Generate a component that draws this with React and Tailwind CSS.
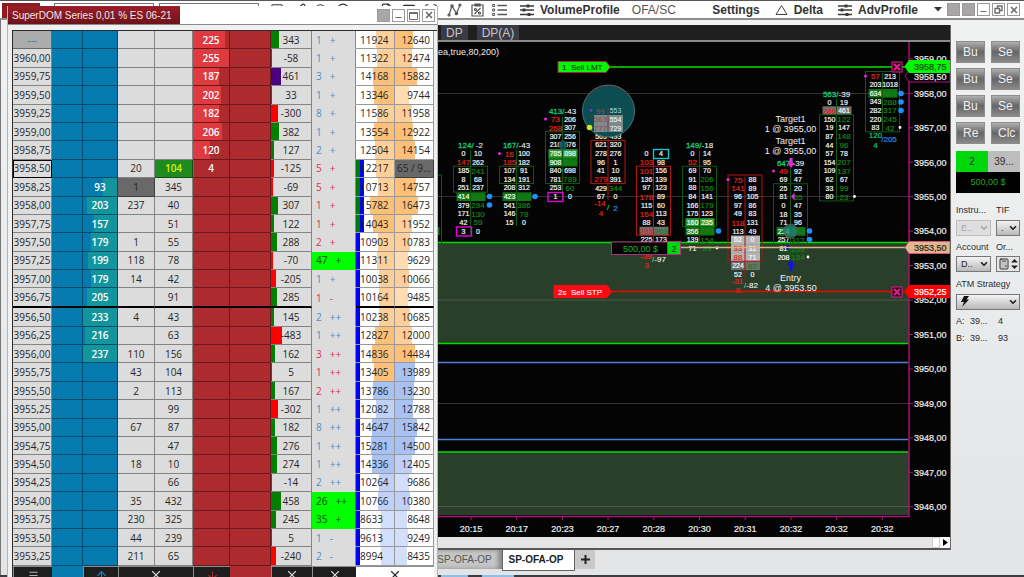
import React from "react";
import {
  Search, Circle, Pencil, Square, FileText, AppWindow, Scan, Minus, ChevronDown, X,
  Calculator, ArrowUp, ArrowDown, Menu,
} from "lucide-react";

/* ---------- SuperDOM ladder ---------- */

// price, bid, tradedBid, tradedAsk, ask, delta, speed, sign, tone, volA, volB
const LADDER = [
  ["---", "", "", "", 225, 343, 1, "+", "b", 11924, 12640],
  ["3960,00", "", "", "", 255, -58, 1, "+", "b", 11322, 12474],
  ["3959,75", "", "", "", 187, 461, 3, "+", "b", 14168, 15882],
  ["3959,50", "", "", "", 202, 33, 1, "+", "b", 13346, 9744],
  ["3959,25", "", "", "", 182, -300, 8, "+", "b", 11586, 11958],
  ["3959,00", "", "", "", 206, 382, 1, "+", "b", 13554, 12922],
  ["3958,75", "", "", "", 120, 127, 2, "+", "b", 12504, 14154],
  ["3958,50", "", 20, 104, 4, -125, 5, "+", "r", 12217, "65 / 9..."],
  ["3958,25", 93, 1, 345, "", -69, 5, "+", "r", 10713, 14757],
  ["3958,00", 203, 237, 40, "", 307, 1, "+", "r", 15782, 16473],
  ["3957,75", 157, "", 51, "", 122, 1, "+", "r", 14043, 11952],
  ["3957,50", 179, 1, 55, "", 288, 2, "+", "r", 10903, 10783],
  ["3957,25", 199, 118, 78, "", -70, 47, "+", "hl", 11311, 9629],
  ["3957,00", 179, 14, 42, "", -205, 1, "+", "b", 10038, 10066],
  ["3956,75", 205, "", 91, "", 285, 1, "-", "r", 10164, 9485],
  ["3956,50", 233, 4, 43, "", 145, 2, "++", "b", 10238, 10685],
  ["3956,25", 216, "", 63, "", -483, 1, "++", "b", 12827, 12000],
  ["3956,00", 237, 110, 156, "", 162, 3, "++", "r", 14836, 14484],
  ["3955,75", "", 43, 104, "", 5, 1, "++", "r", 13405, 13989],
  ["3955,50", "", 2, 113, "", 167, 2, "++", "r", 13786, 13230],
  ["3955,25", "", "", 99, "", -302, 1, "++", "b", 12082, 12788],
  ["3955,00", "", 67, 87, "", 182, 8, "++", "b", 14647, 15842],
  ["3954,75", "", "", 47, "", 276, 1, "++", "b", 15281, 14500],
  ["3954,50", "", 18, 10, "", 274, 1, "++", "b", 14336, 12405],
  ["3954,25", "", "", 66, "", -14, 2, "++", "b", 10264, 9686],
  ["3954,00", "", 35, 432, "", 458, 26, "++", "hl", 10766, 10380],
  ["3953,75", "", 230, 325, "", 245, 35, "+", "hl", 8633, 8648],
  ["3953,50", "", 44, 239, "", 5, 1, "-", "b", 9613, 9249],
  ["3953,25", "", 211, 65, "", -240, 2, "-", "b", 8994, 8435],
];

const TONES = {
  b: "text-[#4f8fc4]",
  r: "text-[#dc2f55]",
  hl: "text-[#0b3b0b] bg-[#00ff00]",
};

const layer = (side, color, width) => `linear-gradient(to ${side}, ${color} ${width}px, transparent ${width}px)`;

const bar = (side, color, width) => ({
  backgroundImage: layer(side, color, width),
  backgroundRepeat: "no-repeat",
});

const shade = (value, blue) => {
  const level = value > 12600 ? 0 : value > 9900 ? 1 : 2;
  return (blue ? ["#a8c2f4", "#bfd1f8", "#d2dffb"] : ["#fdc078", "#fecf98", "#ffdcb2"])[level];
};

// Session range strips at the left edge of the first volume column.
const volumeBackground = (value, i) => {
  const layers = [layer("left", shade(value, i > 18), Math.round(value * 0.0015))];
  if (i >= 7 && i < 11) layers.unshift(layer("right", "#007a00", 4), layer("right", "#0000ff", 8));
  if (i >= 11) layers.unshift(layer("right", "#0000ff", 4));
  return { backgroundImage: layers.join(", "), backgroundRepeat: "no-repeat" };
};

function LadderRow({ row, i }) {
  const [price, bid, tBid, tAsk, ask, delta, speed, sign, tone, volA, volB] = row;
  const line = price === "3956,75" ? "border-b-2 border-b-black" : "border-b border-b-black/40";
  const cell = `${line} border-r border-r-black/40 p-0`;
  const current = price === "3958,50";
  const deltaColor = delta > 460 ? "#4b0082" : delta < 0 ? "#ff0000" : "#008000";
  return (
    <tr>
      <th scope="row" className={`${cell} font-normal ${i === 0 ? "bg-[#acacac] text-[#1c87a0]" : "bg-[#dcdcdc]"} ${current ? "outline-1 -outline-offset-1 outline-black" : ""}`}>
        {price}
      </th>
      <td className={`${cell} bg-[#067baf]`} />
      <td className={`${cell} bg-[#067baf] text-center font-semibold text-white`} style={bid ? bar("left", "#12959c", Math.round(bid * 0.147)) : undefined}>{bid}</td>
      <td className={`${cell} text-center ${price === "3958,25" ? "bg-[#696969]" : "bg-[#dcdcdc]"}`}>{tBid}</td>
      <td className={`${cell} text-center ${current ? "bg-[#1f8a1f] font-semibold text-[#d8f000]" : "bg-[#dcdcdc]"}`}>{tAsk}</td>
      <td className={`${cell} bg-[#ad2b2f] text-center font-semibold text-white`} style={ask ? bar("right", "#de3a3f", Math.round(ask * 0.141)) : undefined}>{ask}</td>
      <td className={`${cell} bg-[#ad2b2f]`} />
      <td className={`${cell} bg-[#dcdcdc] text-center`} style={bar("right", deltaColor, Math.max(1, Math.round(Math.abs(delta) * 0.022)))}>{delta}</td>
      <td className={`border-r border-b border-r-black/40 border-b-transparent p-0 pl-1 ${tone === "hl" ? "" : "bg-[#dcdcdc]"} ${TONES[tone]}`}>
        <span className="flex gap-2 font-medium"><span>{speed}</span><span>{sign}</span></span>
      </td>
      <td className={`${cell} bg-white text-left`} style={volumeBackground(volA, i)}>
        <span className="block pl-1">{volA}</span>
      </td>
      {current ? (
        <td className={`${cell} bg-[#696969] text-center whitespace-nowrap`}>{volB}</td>
      ) : (
        <td className={`${cell} bg-white text-right`} style={bar("right", shade(volB, i > 17), Math.round(volB * 0.0014))}>
          <span className="block pr-[3px]">{volB}</span>
        </td>
      )}
    </tr>
  );
}

const FOOT = "border-l border-t border-[#8c8c8c] bg-[#1e1e1e] p-0";

function FootButton({ label, children }) {
  return <button aria-label={label} className="flex h-4 w-full items-center justify-center">{children}</button>;
}

function WinButton({ label, children, solid }) {
  return (
    <button aria-label={label} className={`flex size-[13px] items-center justify-center border border-[#9a9a9a] text-[#6d6d6d] ${solid ? "bg-[#aaa6a8]" : "bg-white"}`}>
      {children}
    </button>
  );
}

function SuperDom() {
  return (
    <section className="absolute top-[6px] bottom-0 left-[7px] flex w-[431px] flex-col overflow-hidden border-x border-[#b4b4b4] bg-[#eef0f1]">
      <header className="flex h-[19px] shrink-0 items-stretch border-b border-[#8a8a8a] bg-white">
        <h1 className="flex w-[172px] items-center bg-linear-to-b from-[#9a1f28] to-[#6e1219] pl-1 text-[10px] whitespace-nowrap text-[#f7e6e6]">
          SuperDOM Series 0,01 % ES 06-21
        </h1>
        <div className="ml-auto flex items-center gap-[2px] pr-[2px]">
          <WinButton label="Link" solid />
          <WinButton label="Minimize"><Minus size={9} strokeWidth={3} className="mt-1" /></WinButton>
          <WinButton label="Maximize"><svg width="9" height="9"><path d="M.5 1.5h8v7h-8zM.5 2.5h8" fill="none" stroke="currentColor" /></svg></WinButton>
          <WinButton label="Close"><X size={10} strokeWidth={4} /></WinButton>
        </div>
      </header>
      <div className="mt-[5px] ml-[4px] border-t border-l border-[#2d2d2d]">
        <table className="h-[552px] w-[421px] table-fixed border-separate border-spacing-0 font-['Open_Sans','Noto_Sans',sans-serif] text-[10px] leading-3 text-[#262626]">
          <colgroup>
            <col className="w-[39px]" /><col className="w-[31px]" /><col className="w-[35px]" />
            <col className="w-[37px]" /><col className="w-[38px]" /><col className="w-[37px]" />
            <col className="w-[41px]" /><col className="w-[41px]" /><col className="w-[44px]" />
            <col className="w-[39px]" /><col className="w-[39px]" />
          </colgroup>
          <tbody>
            {LADDER.map((row, i) => <LadderRow key={row[0]} row={row} i={i} />)}
          </tbody>
          <tfoot>
            <tr>
              <td className={FOOT}><FootButton label="Menu"><Menu size={11} className="text-[#c4c4c4]" /></FootButton></td>
              <td className="bg-[#067baf] p-0" />
              <td className={FOOT}><FootButton label="Center bid"><ArrowUp size={13} className="text-[#1488c4]" /></FootButton></td>
              <td colSpan={2} className={FOOT}><FootButton label="Clear trades"><X size={14} className="text-[#d0d0d0]" /></FootButton></td>
              <td className={FOOT}><FootButton label="Center ask"><ArrowDown size={13} className="text-[#b0282c]" /></FootButton></td>
              <td className="bg-[#ad2b2f] p-0" />
              <td className={FOOT}><FootButton label="Clear delta"><X size={14} className="text-[#d0d0d0]" /></FootButton></td>
              <td className={FOOT}><FootButton label="Clear speed"><X size={14} className="text-[#d0d0d0]" /></FootButton></td>
              <td colSpan={2} className="border-t border-[#8c8c8c] bg-white p-0"><FootButton label="Clear volume"><X size={14} /></FootButton></td>
            </tr>
          </tfoot>
        </table>
      </div>
    </section>
  );
}

/* ---------- Footprint chart ---------- */

const PITCH = 8.62;

// Cell prefixes: r = red, g = green. Row mark: h = green, H = bright green, s = gray, w = light gray.
const COLUMNS = [
  { x: 470.5, y: 153.5, title: ["124", " -2"], box: [2, 5, "g"], rows: "0 10|r147 262|185 g241|8 68|251 237|414 g422 h|379 g294|171 g130|42 g59|3 0" },
  { x: 516.5, y: 153.5, title: ["167", "-43"], box: [2, 4, "g"], rows: "r16 100|r185 182|107 91|134 191|208 312|423 g602 h|541 g386|146 g78|15 0" },
  { x: 562.5, y: 119, title: ["413", "-43"], box: [2, 8, "g"], rows: "r73 206|r268 307|307 256|210 576|785 898 H|908 g949 h|840 698|781 g789|253 g60|1 0" },
  { x: 608, y: 110.5, box: [4, 9, "r"], rows: "||| 565 493|621 320|278 276|96 1|41 10|r279 391|429 g344|67 0" },
  { x: 653.5, y: 153.5, box: [2, 10, "r"], rows: "0 4|r103 98|r101 156|136 139|97 123|r178 89|115 60|r164 113|88 43|r293 g263 s|225 173" },
  { x: 699.5, y: 153.5, title: ["149", "-18"], box: [2, 9, "g"], rows: "0 14|r52 95|69 70|91 g206|88 g156|84 141|166 g179|175 123|160 235 H|356 g393 h|139 g154|71 g39" },
  { x: 745, y: 179.5, box: [0, 10, "r"], rows: "r75 88|r141 89|96 105|97 86|49 83|r118 131|113 49|52 0 w|r33 31 w|r88 71 w|224 g87 s|52 0" },
  { x: 790.5, y: 171, title: ["647", "-39"], box: [2, 10, "g"], rows: "r49 92|69 47|25 20|81 g65|0 47|18 35|71 96|214 g331 h|257 g317|81 g259|208 g134" },
  { x: 836.5, y: 102, title: ["563", "-39"], box: [2, 12, "g"], rows: "0 19|r246 461 s|150 g122|19 147|87 g148|44 g96|57 78|154 g207|109 g137|62 67|33 g99|80 g23" },
  { x: 882.5, y: 76, box: [0, 7, "g"], rows: "r57 213|203 1018|634 g903 h|343 g288|282 g317|220 g245|83 g42" },
];

const MARK = { h: "#0f7412", H: "#2e9a31", s: "#6f6f6f", w: "#b4b4b4" };

function Cell({ x, y, value }) {
  const tone = value[0];
  const color = tone === "r" ? "#e82020" : tone === "g" ? "#178217" : "#f4f4f4";
  const colored = color !== "#f4f4f4";
  return (
    <text x={x} y={y + (colored ? 3 : 2.5)} fontSize={colored ? 8 : 7} fill={color} stroke={color} strokeWidth="0.2">
      {colored ? value.slice(1) : value}
    </text>
  );
}

function FootprintColumn({ x, y, title, box, rows }) {
  const list = rows.split("|").map((r) => r.trim().split(" "));
  const edge = box[2] === "r" ? "#b01414" : "#0b5a0f";
  return (
    <g textAnchor="middle">
      {list.map(([, , mark], i) => mark && (
        <rect key={i} x={x - 14} y={y + i * PITCH - 4.3} width="29" height="8.7" fill={MARK[mark]} />
      ))}
      <path d={`M${x} ${y - 3}V${y + list.length * PITCH - 5}`} stroke={edge} />
      <rect x={x - 17} y={y + box[0] * PITCH - 4.5} width="34" height={(box[1] - box[0]) * PITCH} fill="none" stroke={edge} />
      {list.map(([l, r], i) => r && (
        <g key={i}>
          <Cell x={x - 7} y={y + i * PITCH} value={l} />
          <Cell x={x + 7.5} y={y + i * PITCH} value={r} />
        </g>
      ))}
      {title && (
        <text x={x} y={y - 5.5} fontSize="8" fill="#f0f0f0" stroke="#f0f0f0" strokeWidth="0.1" xmlSpace="preserve">
          <tspan fill="#12c877" stroke="#12c877" strokeWidth="0.3">{title[0]}/</tspan>{title[1]}
        </text>
      )}
    </g>
  );
}

const GRID = [93.5, 196.5, 300, 403.5, 506.5];
const PRICES = [3959, 3958, 3957, 3956, 3955, 3954, 3953, 3952, 3951, 3950, 3949, 3948, 3947, 3946];
const TIMES = ["20:15", "20:17", "20:23", "20:27", "20:28", "20:30", "20:31", "20:32", "20:32", "20:32"];
const BLUE_DOTS = [[489.5, 196.5], [489.5, 205], [535, 196.5], [718.5, 231], [809.5, 231], [809.5, 239.5], [901, 93.5], [901, 102], [901, 110.5]];
const PINK_DOTS = [[499.5, 153.5], [545.5, 119], [728, 179.5], [773.5, 171], [865.5, 76]];
const WHITE_DOTS = [[717, 248], [808, 257], [854.5, 196.5], [900, 127.5]];

function PriceTag({ y, fill, stroke, color, children }) {
  return (
    <g>
      <path d={`M905 ${y}L909 ${y - 6}H950V${y + 6}H909Z`} fill={fill} stroke={stroke} />
      <text x="914" y={y + 3.5} fontSize="9" fill={color} stroke={color} strokeWidth="0.2">{children}</text>
    </g>
  );
}

function CancelBox({ y }) {
  return (
    <g stroke="#e0208c">
      <rect x="892" y={y - 5} width="10" height="10" fill="#2a0418" />
      <path d={`M894 ${y - 3}l6 6m0 -6l-6 6`} strokeWidth="2" />
    </g>
  );
}

function Chart() {
  return (
    <svg viewBox="7 42 943 495" preserveAspectRatio="xMaxYMin slice" className="block min-h-0 w-full flex-1 bg-[#040404] font-['Liberation_Sans',Arial,sans-serif]" role="img" aria-label="ES 06-21 footprint chart">
      <rect x="7" y="242" width="902" height="102" fill="#293f29" />
      <rect x="7" y="452" width="902" height="63" fill="#293f29" />
      <g stroke="#8a8a8a" strokeOpacity="0.35">
        {GRID.map((y) => <path key={y} d={`M7 ${y}H909`} />)}
      </g>
      <path d="M7 242.5H908M7 343.5H908M7 452H908" stroke="#00dc00" strokeWidth="1.6" />
      <path d="M7 362.5H908M7 439.5H908" stroke="#4f7fd6" strokeWidth="1.4" />
      <path d="M909 42V516.5H7" fill="none" stroke="#b0107a" strokeWidth="1.4" />

      <rect x="420" y="175" width="21.5" height="77" fill="none" stroke="#0b5a0f" />
      <rect x="420" y="227" width="19.5" height="8" fill="#0f7412" />
      {COLUMNS.map((c) => <FootprintColumn key={c.x} {...c} />)}

      <g fill="none" strokeWidth="1.4">
        <rect x="456.5" y="227" width="15" height="9" stroke="#e000e0" />
        <rect x="548" y="192.5" width="15" height="9" stroke="#e000e0" />
        <rect x="653.5" y="149.5" width="15" height="9" stroke="#10c8d0" />
      </g>
      <g fill="#1e90ff">{BLUE_DOTS.map(([x, y]) => <circle key={`${x}-${y}`} cx={x} cy={y} r="2.8" />)}</g>
      <g fill="#f020f0">{PINK_DOTS.map(([x, y]) => <circle key={x} cx={x} cy={y} r="1.5" />)}</g>
      <g fill="#ffffff">{WHITE_DOTS.map(([x, y]) => <circle key={x} cx={x} cy={y} r="1.4" />)}</g>

      <circle cx="608.5" cy="111" r="26" fill="#7a1c28" />
      <circle cx="608.5" cy="111.5" r="25.5" fill="#0b4d50" />
      <rect x="594" y="115" width="29" height="17" fill="#7b8a8c" />
      <path d="M608 108V132" stroke="#7a3a3e" />
      <g fontSize="7" textAnchor="middle">
        <text x="600.5" y="113.500" fontSize="8" fill="#8a5555">99</text><text x="615.5" y="113" fill="#b9d8da">553</text>
        <text x="600.5" y="122" fontSize="8" fill="#a83c3c">563</text><text x="615.5" y="121.500" fill="#ffffff">554</text>
        <text x="600.5" y="131" fontSize="8" fill="#a83c3c">777</text><text x="615.5" y="130.500" fill="#ffffff">729</text>
      </g>
      <circle cx="608.5" cy="111" r="26" fill="none" stroke="#39797c" />
      <circle cx="591" cy="110.5" r="1.4" fill="#7a35c8" />
      <circle cx="589.5" cy="127.5" r="2.8" fill="#c8e82a" />
      <circle cx="563" cy="145" r="4.5" fill="#12565a" fillOpacity="0.85" />
      <circle cx="790.5" cy="231" r="7" fill="#1f8078" fillOpacity="0.8" stroke="#5b4a4a" />

      <g fontSize="8" textAnchor="middle">
        <g fill="#e82020" stroke="#e82020" strokeWidth="0.2">
          <text x="600" y="206">-14</text><text x="601" y="215.5">4</text>
          <text x="646" y="258.5">-39</text><text x="646.5" y="267.5">3</text>
          <text x="737.5" y="283.5">-31</text><text x="738" y="293">8</text>
        </g>
        <g fill="#12c877" stroke="#12c877" strokeWidth="0.2">
          <text x="608" y="210">/</text>
          <text x="875.5" y="137.5">120</text><text x="875.5" y="147.5">4</text>
        </g>
        <g fill="#2b8be8" stroke="#2b8be8" strokeWidth="0.2">
          <text x="615.5" y="210.5">2</text>
          <text x="889" y="142">/205</text>
        </g>
        <g fill="#f0f0f0" stroke="#f0f0f0" strokeWidth="0.1">
          <text x="659" y="262"><tspan fill="#12c877">/</tspan>-97</text>
          <text x="751" y="288"><tspan fill="#12c877">/</tspan>-82</text>
        </g>
      </g>

      <path d="M610 67H905" stroke="#00e000" strokeWidth="1.4" />
      <path d="M611 291.5H908" stroke="#f00000" strokeWidth="1.4" />
      <path d="M681 247.5H908" stroke="#d8b487" strokeWidth="1.6" />
      <path d="M558 61.5H606L610.5 67L606 72.5H558Z" fill="#00f800" stroke="#a02050" />
      <text x="562" y="70" fontSize="8" fill="#052c05" stroke="#052c05" strokeWidth="0.1" xmlSpace="preserve">1  Sell LMT</text>
      <path d="M554 285.5H607L611.5 291.5L607 297.5H554Z" fill="#ff0a14" stroke="#ff0a14" />
      <text x="558" y="294.5" fontSize="8" fill="#ffffff" stroke="#ffffff" strokeWidth="0.1" xmlSpace="preserve">2s  Sell STP</text>
      <rect x="611.5" y="242" width="56" height="12.5" fill="#050505" stroke="#b03080" />
      <text x="623" y="251.5" fontSize="9" fill="#1fb02a">500,00 $</text>
      <rect x="667.5" y="241.5" width="13" height="13" fill="#00d80c" stroke="#b03080" />
      <text x="674" y="251.5" fontSize="9" fill="#063a06" textAnchor="middle">2</text>

      <g fontSize="9" fill="#f2f2f2" textAnchor="middle">
        <text x="790.5" y="122">Target1</text><text x="790.5" y="131.5">1 @ 3955,00</text>
        <text x="790.5" y="144">Target1</text><text x="790.5" y="153.5">1 @ 3955,00</text>
        <text x="790.5" y="281">Entry</text><text x="791" y="291">4 @ 3953.50</text>
      </g>
      <path d="M789.5 158h3v5h2l-3.500 5l-3.500 -5h2z" fill="#f020f0" />
      <path d="M791 196.500l3.500 -4v8z" fill="#f020f0" />
      <path d="M791 260l4 5h-2.500v6h-3v-6h-2.500z" fill="#1010ff" />
      <path d="M787.500 245v6" stroke="#1010ff" strokeWidth="2" strokeDasharray="2 1" />

      <text x="499" y="54.5" fontSize="9" fill="#ececec" textAnchor="end">Area,true,80,200)</text>

      <g fontSize="9" fill="#ededed" stroke="#ededed" strokeWidth="0.2">
        {PRICES.map((p, i) => (
          <g key={p}>
            <path d={`M909 ${58.9 + i * 34.45}h4`} stroke="#b0107a" strokeWidth="1" />
            <text x="914" y={62.2 + i * 34.45}>{p},00</text>
          </g>
        ))}
        {TIMES.map((t, i) => (
          <g key={i}>
            <path d={`M${471 + i * 45.7} 516v4`} stroke="#b0107a" strokeWidth="1" />
            <text x={471 + i * 45.7} y="531.5" textAnchor="middle">{t}</text>
          </g>
        ))}
      </g>
      <PriceTag y={76} fill="#050505" stroke="#b0107a" color="#ededed">3958,50</PriceTag>
      <PriceTag y={66.500} fill="#00f800" stroke="#00f800" color="#0a4a0a">3958,75</PriceTag>
      <PriceTag y={247.500} fill="#dfb88f" stroke="#e04a80" color="#2c241a">3953,50</PriceTag>
      <PriceTag y={291.500} fill="#ff0000" stroke="#ff0000" color="#ffffff">3952,25</PriceTag>
      <CancelBox y={67} />
      <CancelBox y={292} />
    </svg>
  );
}

/* ---------- Toolbar ---------- */

const Sliders = () => (
  <svg width="14" height="14" viewBox="0 0 14 14" stroke="#3a3a3a" strokeWidth="1.3" className="shrink-0">
    <path d="M0 3h14M0 7h14M0 11.500h14" /><path d="M8 1.500v3M4 5.500v3M9 10v3" strokeWidth="3" />
  </svg>
);

function Toolbar() {
  return (
    <header className="flex h-[20px] shrink-0 items-center border-t border-b-2 border-t-[#55555a] border-b-[#8e8e90] bg-white text-[12px] text-[#333]">
      <div className="flex w-[447px] shrink-0 items-start self-stretch overflow-hidden pt-[2px] pl-[2px]">
        <button className="h-[15px] w-[38px] bg-[#8b1a22] text-[11px] leading-4 font-bold text-[#f0d8d8]">Start</button>
        <input aria-label="Instrument" className="ml-[14px] h-[15px] w-[100px] border border-[#777]" />
        <input aria-label="Interval" className="ml-[5px] h-[15px] w-[100px] border border-[#777]" />
        <div className="ml-[11px] flex gap-[8px]">
          {[Square, Pencil, Search, Circle, Minus, FileText, AppWindow, Scan].map((Icon, i) => (
            <button key={i} aria-label={`Tool ${i + 1}`}><Icon size={14} /></button>
          ))}
        </div>
      </div>
      <button aria-label="Zigzag" className="shrink-0">
        <svg width="15" height="14" viewBox="0 0 15 14" fill="none" stroke="#555" strokeWidth="1.200"><path d="M2 12L5 3L9.500 10.500L13 2" /><circle cx="2" cy="12" r="1" /><circle cx="5" cy="3" r="1.200" /><circle cx="9.500" cy="10.500" r="1.200" /><circle cx="13" cy="2" r="1" /></svg>
      </button>
      <button aria-label="Report" className="ml-[9px] shrink-0">
        <svg width="13" height="14" viewBox="0 0 13 14" fill="none" stroke="#555" strokeWidth="1.200"><path d="M1 2h11v11H1zM4 1h5v2H4zM3.500 11L9.500 5" /><circle cx="4.500" cy="6.500" r="1" /><circle cx="8.500" cy="10" r="1" /></svg>
      </button>
      <button aria-label="List" className="ml-[8px] shrink-0">
        <svg width="15" height="14" viewBox="0 0 15 14" fill="none" stroke="#555" strokeWidth="1.300"><path d="M5.500 2.500H15M5.500 7H15M5.500 11.500H15" /><path d="M.6 1.500h2v2h-2zM.6 6h2v2h-2zM.6 10.500h2v2h-2z" strokeWidth="1" /></svg>
      </button>
      <button className="ml-[13px] flex shrink-0 items-center gap-[6px] font-bold"><Sliders />VolumeProfile</button>
      <button className="ml-[12px] shrink-0 text-[#555]">OFA/SC</button>
      <nav className="ml-auto flex shrink-0 items-center font-bold">
        <button>Settings</button>
        <button className="ml-[15px] flex items-center gap-[6px]">
          <svg width="13" height="12" viewBox="0 0 13 12" fill="none" stroke="#444"><path d="M6.500 1.500L12 10.500H1z" /></svg>Delta
        </button>
        <button className="ml-[15px] flex items-center gap-[6px]"><Sliders />AdvProfile</button>
        <button aria-label="More" className="ml-[16px]"><svg width="8" height="5"><path d="M0 0h8L4 4.500z" fill="#333" /></svg></button>
        <div className="ml-[5px] flex gap-[2px] pr-[4px]">
          <WinButton label="Link A" solid />
          <WinButton label="Link B" solid />
          <WinButton label="Minimize chart"><Minus size={9} strokeWidth={3} className="mt-1" /></WinButton>
          <WinButton label="Restore chart"><svg width="9" height="9" fill="none" stroke="currentColor" strokeWidth="1.400"><path d="M1 3.500h4.500V8H1zM3.500 3.500V1H8v4.500H5.500" /></svg></WinButton>
          <WinButton label="Close chart"><X size={10} strokeWidth={4} /></WinButton>
        </div>
      </nav>
    </header>
  );
}

/* ---------- Trade panel ---------- */

function Picker({ id, label, value, disabled, icon }) {
  return (
    <span className="relative block">
      <select id={id} aria-label={label} disabled={disabled} className={`block h-4 w-full appearance-none border pl-1 text-[9px] leading-3 ${disabled ? "border-[#bdbdbd] bg-[#dedede] text-[#a5a5a5]" : "border-[#777] bg-linear-to-b from-[#f4f4f4] to-[#b9b9b9] text-[#222]"}`}>
        <option>{value}</option>
      </select>
      {icon}
      <ChevronDown size={10} strokeWidth={4} className={`pointer-events-none absolute top-[3px] right-[2px] ${disabled ? "text-[#a5a5a5]" : "text-[#222]"}`} />
    </span>
  );
}

function TradePanel() {
  return (
    <aside className="w-[73px] shrink-0 pt-[21px] pr-[4px] pl-[5px] text-[9px] leading-3 text-[#2c2c2c]">
      <div className="grid grid-cols-2 gap-x-[6px] gap-y-[5px]">
        {["Bu", "Se", "Bu", "Se", "Bu", "Se", "Re", "Clc"].map((t, i) => (
          <button key={i} className="h-[22px] overflow-hidden border border-[#8d8d8d] bg-linear-to-b from-[#b0b0b0] via-[#666668] to-[#8a8a8a] px-[6px] text-left text-[12px] leading-4 text-[#f0f0f0]">{t}</button>
        ))}
      </div>
      <div className="mt-[7px] flex h-[21px] text-center text-[10px] leading-[21px]">
        <span className="flex-1 bg-[#00d80c]">2</span>
        <span className="flex-1 bg-[#bdbdbd]">39...</span>
      </div>
      <div className="h-[21px] bg-black text-center text-[9px] leading-[21px] text-[#1fa82a]">500,00 $</div>
      <div className="mt-[11px] grid grid-cols-[35px_1fr] gap-x-[5px]">
        <label htmlFor="instrument">Instru...</label><label htmlFor="tif">TIF</label>
        <div className="mt-[4px]"><Picker id="instrument" value="E.." disabled /></div>
        <div className="mt-[4px]"><Picker id="tif" value="." /></div>
        <label htmlFor="account" className="mt-[5px]">Account</label><label htmlFor="qty" className="mt-[5px]">Or...</label>
        <div className="mt-[3px]"><Picker id="account" value="D.." /></div>
        <button id="qty" className="mt-[3px] flex h-4 items-center justify-between border border-[#777] bg-[#e6e6e6] px-[1px]">
          <Calculator size={12} strokeWidth={2} />
          <svg width="7" height="12" viewBox="0 0 7 12" fill="#222"><path d="M0 4.500L3.500 1L7 4.500zM0 7.500L3.500 11L7 7.500z" /></svg>
        </button>
      </div>
      <label htmlFor="atm" className="mt-[6px] mb-[4px] block">ATM Strategy</label>
      <Picker id="atm" value="" icon={<svg width="8" height="11" viewBox="0 0 8 11" className="pointer-events-none absolute top-[2px] left-[5px]"><path d="M3 0H8L5.500 3.500H8L1 11L3 6H0z" fill="#111" /></svg>} />
      <dl className="mt-[5px] grid grid-cols-[14px_28px_1fr] gap-y-[5px]">
        <dt>A:</dt><dd>39...</dd><dd>4</dd>
        <dt>B:</dt><dd>39...</dd><dd>93</dd>
      </dl>
    </aside>
  );
}

export default function App() {
  return (
    <main className="relative flex h-screen flex-col overflow-hidden bg-linear-to-b from-[#f1f2f2] to-[#e3e4e6] font-['Liberation_Sans',Arial,sans-serif]">
      <Toolbar />
      <div className="flex min-h-0 flex-1 border-l border-[#777]">
        <section className="ml-[6px] mt-[5px] flex min-w-0 flex-1 flex-col">
          <div className="flex min-h-0 flex-1 flex-col border-r border-[#6a6a6a]">
            <div className="flex h-[17px] shrink-0 items-end gap-[9px] border-b-2 border-[#8a8a8a] bg-[#1f1f20] pl-[434px] text-[12px] leading-4 text-[#c6c6c6]">
              <button className="h-[15px] bg-[#3b3b43] px-[5px]">DP</button>
              <button className="h-[15px] bg-[#3b3b43] px-[5px]">DP(A)</button>
            </div>
            <Chart />
            <div className="flex h-[13px] shrink-0 items-stretch justify-end border-b-2 border-[#55555a] bg-[#e5e5e5]">
              <span className="w-[8px] border border-[#cfcfcf] bg-white" />
              <button aria-label="Scroll right" className="flex w-[10px] items-center justify-center bg-white"><svg width="5" height="7"><path d="M0 0L5 3.500L0 7z" fill="#000" /></svg></button>
            </div>
          </div>
          <nav className="flex h-[25px] shrink-0 items-start pl-[420px] text-[10px] leading-[18px]">
            <button className="h-[19px] w-[75px] bg-[#c6c6c6] text-[#555] shadow-[inset_-4px_0_4px_#8a8a8a]">SP-OFA-OP</button>
            <button className="h-[21px] w-[73px] border border-t-0 border-[#666] bg-white pr-[5px] text-[#222] font-bold">SP-OFA-OP</button>
            <button aria-label="Add tab" className="flex h-[19px] w-[20px] items-center justify-center bg-[#c9c9c9]"><svg width="9" height="9" stroke="#222" strokeWidth="2"><path d="M0 4.500h9M4.500 0v9" /></svg></button>
          </nav>
        </section>
        <TradePanel />
      </div>
      <footer className="flex h-[2px] shrink-0 bg-[#3c3c40] pl-[441px]">
        <span className="w-[27px] bg-[#8cc0ea]" /><span className="ml-[14px] w-[32px] bg-[#8cc0ea]" />
      </footer>
      <SuperDom />
    </main>
  );
}
